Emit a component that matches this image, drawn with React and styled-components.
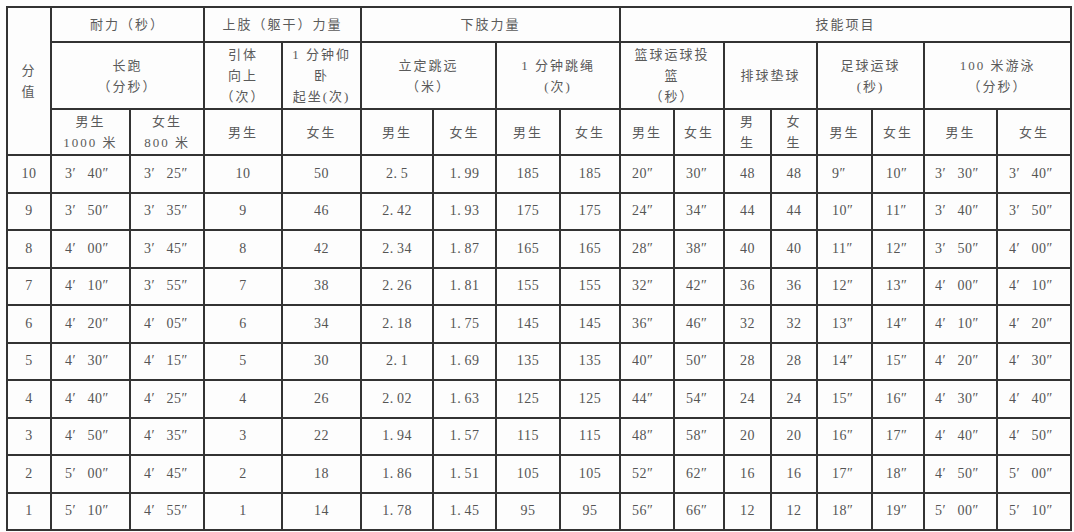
import React from 'react';
import styled, { createGlobalStyle } from 'styled-components';

const GlobalStyle = createGlobalStyle`
  html, body {
    margin: 0;
    padding: 0;
    background: #ffffff;
  }
  body {
    font-family: "Liberation Serif", "Noto Sans CJK SC", serif;
  }
`;

const Page = styled.div`
  width: 1074px;
  height: 532px;
  padding: 6px 0 0 6px;
  box-sizing: border-box;
  background: #fdfdfd;
  overflow: hidden;
`;

const Table = styled.table`
  border-collapse: collapse;
  table-layout: fixed;
  width: 1064px;
  border: 2px solid #262626;
  color: #555;
`;

const HeadRow = styled.tr`
  height: ${(p) => p.$h}px;
`;

const BodyRow = styled.tr`
  height: 37.5px;
`;

const Th = styled.th`
  border: 2px solid #333;
  font-weight: 400;
  font-size: 13px;
  letter-spacing: 2px;
  line-height: 21px;
  color: #5a5a5a;
  padding: 0;
  text-align: center;
  vertical-align: middle;
  font-family: "Liberation Serif", "Noto Sans CJK SC", serif;
`;

const Td = styled.td`
  border: 2px solid #333;
  font-size: 14px;
  color: #555;
  padding: 0 0 0 ${(p) => (p.$left ? p.$left : 0)}px;
  text-align: ${(p) => (p.$left ? 'left' : 'center')};
  vertical-align: middle;
  white-space: nowrap;
  letter-spacing: 0.5px;
`;

const widths = [44, 79, 74, 78, 79, 72, 63, 64, 60, 54, 50, 47, 46, 55, 52, 73, 74];

// left padding per column, 0 = centred
const lefts = [0, 13, 13, 0, 0, 0, 0, 0, 0, 11, 11, 0, 0, 14, 13, 10, 11];

const t = (m, s) => `${m}′\u2002 ${s}″`;
const sec = (s) => `${s}″`;
const dec = (v) => v.replace('.', '.\u2009');

const rows = [
  [10, t(3, 40), t(3, 25), 10, 50, '2.5', '1.99', 185, 185, 20, 30, 48, 48, 9, 10, t(3, 30), t(3, 40)],
  [9, t(3, 50), t(3, 35), 9, 46, '2.42', '1.93', 175, 175, 24, 34, 44, 44, 10, 11, t(3, 40), t(3, 50)],
  [8, t(4, '00'), t(3, 45), 8, 42, '2.34', '1.87', 165, 165, 28, 38, 40, 40, 11, 12, t(3, 50), t(4, '00')],
  [7, t(4, 10), t(3, 55), 7, 38, '2.26', '1.81', 155, 155, 32, 42, 36, 36, 12, 13, t(4, '00'), t(4, 10)],
  [6, t(4, 20), t(4, '05'), 6, 34, '2.18', '1.75', 145, 145, 36, 46, 32, 32, 13, 14, t(4, 10), t(4, 20)],
  [5, t(4, 30), t(4, 15), 5, 30, '2.1', '1.69', 135, 135, 40, 50, 28, 28, 14, 15, t(4, 20), t(4, 30)],
  [4, t(4, 40), t(4, 25), 4, 26, '2.02', '1.63', 125, 125, 44, 54, 24, 24, 15, 16, t(4, 30), t(4, 40)],
  [3, t(4, 50), t(4, 35), 3, 22, '1.94', '1.57', 115, 115, 48, 58, 20, 20, 16, 17, t(4, 40), t(4, 50)],
  [2, t(5, '00'), t(4, 45), 2, 18, '1.86', '1.51', 105, 105, 52, 62, 16, 16, 17, 18, t(4, 50), t(5, '00')],
  [1, t(5, 10), t(4, 55), 1, 14, '1.78', '1.45', 95, 95, 56, 66, 12, 12, 18, 19, t(5, '00'), t(5, 10)],
];

const secCols = [9, 10, 13, 14];

const format = (v, i) => {
  if (secCols.includes(i)) return sec(v);
  if (i === 5 || i === 6) return dec(v);
  return v;
};

const App = () => {
  const mf = (key) => [
    <Th key={key + 'm'}>男生</Th>,
    <Th key={key + 'f'}>女生</Th>,
  ];
  return (
    <Page>
      <GlobalStyle />
      <Table>
        <colgroup>
          {widths.map((w, i) => (
            <col key={i} style={{ width: w }} />
          ))}
        </colgroup>
        <thead>
          <HeadRow $h={35}>
            <Th rowSpan={3}>
              分<br />值
            </Th>
            <Th colSpan={2}>耐力（秒）</Th>
            <Th colSpan={2}>上肢（躯干）力量</Th>
            <Th colSpan={4}>下肢力量</Th>
            <Th colSpan={8}>技能项目</Th>
          </HeadRow>
          <HeadRow $h={67}>
            <Th colSpan={2}>
              长跑<br />（分秒）
            </Th>
            <Th>
              引体<br />向上<br />（次）
            </Th>
            <Th>
              1 分钟仰<br />卧<br />起坐(次)
            </Th>
            <Th colSpan={2}>
              立定跳远<br />（米）
            </Th>
            <Th colSpan={2}>
              1 分钟跳绳<br />(次)
            </Th>
            <Th colSpan={2}>
              篮球运球投<br />篮<br />（秒）
            </Th>
            <Th colSpan={2}>排球垫球</Th>
            <Th colSpan={2}>
              足球运球<br />(秒)
            </Th>
            <Th colSpan={2}>
              100 米游泳<br />（分秒）
            </Th>
          </HeadRow>
          <HeadRow $h={46}>
            <Th>
              男生<br />1000 米
            </Th>
            <Th>
              女生<br />800 米
            </Th>
            <Th>男生</Th>
            <Th>女生</Th>
            {mf('jump')}
            {mf('rope')}
            {mf('bball')}
            <Th>
              男<br />生
            </Th>
            <Th>
              女<br />生
            </Th>
            {mf('soccer')}
            {mf('swim')}
          </HeadRow>
        </thead>
        <tbody>
          {rows.map((r) => (
            <BodyRow key={r[0]}>
              {r.map((v, i) => (
                <Td key={i} $left={lefts[i]}>
                  {format(v, i)}
                </Td>
              ))}
            </BodyRow>
          ))}
        </tbody>
      </Table>
    </Page>
  );
};

export default App;
